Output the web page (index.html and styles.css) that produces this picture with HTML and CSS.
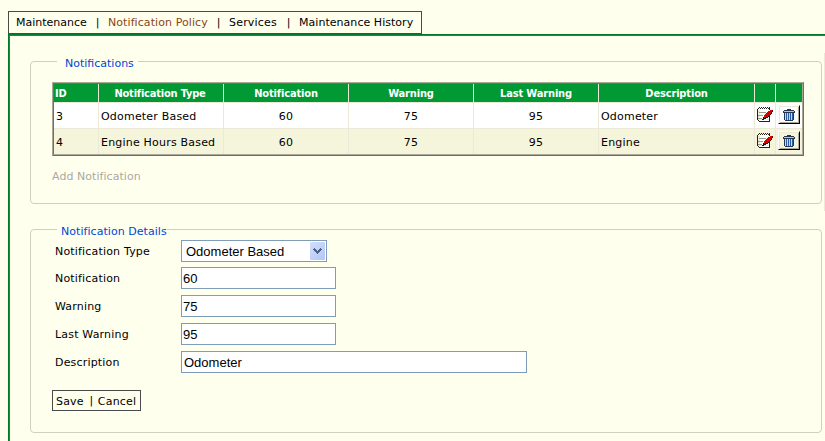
FILE: index.html
```html
<!DOCTYPE html>
<html lang="en">
<head>
<meta charset="utf-8">
<title>Notification Policy</title>
<link rel="stylesheet" href="styles.css">
</head>
<body>
<svg width="0" height="0" class="defs" aria-hidden="true">
  <symbol id="edit" viewBox="0 0 16 17" shape-rendering="crispEdges">
    <path fill="#fff" d="M1 3h12v12H1z"/>
    <path fill="#f0ecd2" d="M1 4h2v10H1zM1 13h11v1H1z"/>
    <path fill="#222" d="M0 3h1v11H0zM1 14h1v1H1zM2 15h11v1H2zM12 10h1v5h-1z"/>
    <path fill="#222" d="M1 2h1v1H1zM3 2h1v1H3zM5 2h1v1H5zM7 2h1v1H7zM9 2h1v1H9zM11 2h1v1h-1zM2 1h1v1H2zM4 1h1v1H4zM6 1h1v1H6zM8 1h1v1H8zM10 1h1v1h-1zM12 1h1v3h-1z"/>
    <path fill="#9c9a80" d="M2 6h7v1H2zM1 9h5v1H1zM1 12h4v1H1z"/>
    <path fill="#111" d="M5 13h2v1H5zM6 12h3v1H6zM8 11h3v1H8zM11 10h1v1h-1zM6 11h1v1H6z"/>
    <path fill="#e00000" d="M13 4h2v1h-2zM11 5h4v1h-4zM10 6h4v1h-4zM9 7h5v1H9zM8 8h5v1H8zM7 9h5v1H7zM7 10h4v1H7zM7 11h1v1H7z"/>
    <path fill="#600" d="M15 4h1v1h-1zM15 5h1v1h-1zM14 6h1v1h-1zM14 7h1v1h-1zM13 8h1v1h-1zM12 9h1v1h-1zM9 9h1v1H9zM11 7h1v1h-1z"/>
  </symbol>
  <symbol id="trash" viewBox="0 0 12 12" shape-rendering="crispEdges">
    <path fill="#26364f" d="M4 0h4v1H4zM1 1h10v1H1zM0 2h1v2H0zM11 2h1v2h-1zM1 3h10v1H1zM1 4h1v7H1zM10 4h1v7h-1zM2 11h8v1H2z"/>
    <path fill="#b4c0ee" d="M1 2h10v1H1z"/>
    <path fill="#b4dcfa" d="M2 4h8v7H2z"/>
    <path fill="#2b5ca8" d="M3 4h1v7H3zM5 4h1v7H5zM7 4h1v7H7zM9 4h1v7H9z"/>
  </symbol>
</svg>
<nav class="tabs">
  <a class="t1">Maintenance</a><i>|</i><a class="t2 active">Notification Policy</a><i>|</i><a class="t3">Services</a><i>|</i><a class="t4">Maintenance History</a>
</nav>
<main class="panel">
  <section class="group list">
    <h2><span>Notifications</span></h2>
    <div class="grid">
    <table>
      <colgroup><col class="c-id"><col class="c-m"><col class="c-m"><col class="c-m"><col class="c-m"><col class="c-desc"><col class="c-edit"><col class="c-del"></colgroup>
      <thead><tr><th class="left">ID</th><th>Notification Type</th><th>Notification</th><th>Warning</th><th>Last Warning</th><th>Description</th><th></th><th></th></tr></thead>
      <tbody>
        <tr><td>3</td><td>Odometer Based</td><td class="num">60</td><td class="num">75</td><td class="num">95</td><td>Odometer</td><td class="icon"><svg class="edit"><use href="#edit"/></svg></td><td class="icon"><button class="del" aria-label="Delete"><svg><use href="#trash"/></svg></button></td></tr>
        <tr class="alt"><td>4</td><td>Engine Hours Based</td><td class="num">60</td><td class="num">75</td><td class="num">95</td><td>Engine</td><td class="icon"><svg class="edit"><use href="#edit"/></svg></td><td class="icon"><button class="del" aria-label="Delete"><svg><use href="#trash"/></svg></button></td></tr>
      </tbody>
    </table>
    </div>
    <a class="add">Add Notification</a>
  </section>
  <section class="group details">
    <h2><span>Notification Details</span></h2>
    <form>
      <div class="row first"><label>Notification Type</label><div class="select"><span>Odometer Based</span><b><svg viewBox="0 0 9 6" shape-rendering="crispEdges"><path fill="#4d6185" d="M1 0h1v1h1v1h1v1h1v-1h1v-1h1v-1h1v1h1v1h-1v1h-1v1h-1v1h-1v1h-1v-1h-1v-1h-1v-1h-1v-1h-1v-1h1z"/></svg></b></div></div>
      <div class="row"><label for="n">Notification</label><input id="n" class="field number" value="60"></div>
      <div class="row"><label for="w">Warning</label><input id="w" class="field number" value="75"></div>
      <div class="row"><label for="l">Last Warning</label><input id="l" class="field number" value="95"></div>
      <div class="row"><label for="d">Description</label><input id="d" class="field wide" value="Odometer"></div>
    </form>
    <div class="actions"><a>Save</a><i>|</i><a>Cancel</a></div>
  </section>
  <div class="edge"></div>
</main>
</body>
</html>
```
FILE: styles.css
```css
* { box-sizing: border-box; }
html { overflow: hidden; }
body {
  margin: 0;
  padding: 11px 0 0 8px;
  height: 441px;
  overflow: hidden;
  background: #ffffee;
  color: #000;
  font: 11px/14px "DejaVu Sans", Verdana, sans-serif;
}
.defs { position: absolute; }
.tabs {
  display: flex;
  align-items: center;
  width: 414px;
  height: 23px;
  padding-left: 7px;
  border: 1px solid #4a4a4a;
  white-space: nowrap;
}
.tabs a { padding-top: 1px; }
.tabs i, .actions i {
  display: flex;
  justify-content: center;
  width: 1px;
  font-style: normal;
  letter-spacing: 0;
}
.t1 { width: 81px; }
.t2 { width: 110px; margin-left: 10px; letter-spacing: .08px; }
.t3 { width: 59px; margin-left: 10px; letter-spacing: .2px; }
.t4 { margin-left: 10px; letter-spacing: .04px; }
.active { color: #8b4513; }
.panel {
  position: relative;
  height: 420px;
  border: solid #007a29;
  border-width: 1px 0 0 1px;
  box-shadow: inset 1px 1px #009933;
  padding: 26px 0 0 21px;
}
.group {
  position: relative;
  width: 792px;
  border: 1px solid #d0d0bf;
  border-radius: 4px;
}
.group h2 {
  position: absolute;
  top: -7px;
  left: 26px;
  margin: 0;
  height: 16px;
  padding-top: 1px;
  background: #ffffee;
  color: #0046d5;
  font-size: 11px;
  font-weight: normal;
  line-height: 16px;
  white-space: nowrap;
}
.list { height: 143px; padding: 20px 0 0 21px; }
.list h2 { width: 81px; padding-left: 8px; }
.details { height: 204px; margin-top: 25px; padding: 10px 0 0 21px; }
.details h2 { width: 110px; padding-left: 4px; letter-spacing: .05px; }
.edge { position: absolute; left: 815px; top: 18px; width: 1px; height: 158px; background: #ece9d8; }
.grid {
  width: 752px;
  border: 1px solid;
  border-color: #aca899 #716f64 #716f64 #aca899;
}
table {
  width: 750px;
  table-layout: fixed;
  border: 1px solid;
  border-color: #716f64 #aca899 #aca899 #716f64;
  border-spacing: 0;
  letter-spacing: .2px;
}
.c-id { width: 45px; }
.c-m { width: 125px; }
.c-desc { width: 156px; }
.c-edit { width: 21px; }
th, td {
  border-right: 1px solid #ece9d8;
  white-space: nowrap;
}
th:last-child, td:last-child { border-right: 0; }
th {
  height: 19px;
  padding: 1px 0 0;
  border-bottom: 1px solid #ece9d8;
  background: #009933;
  color: #fff;
  font-family: "DejaVu Sans Condensed", "DejaVu Sans", sans-serif;
  font-stretch: condensed;
  letter-spacing: -.15px;
  line-height: 17px;
}
th:nth-child(2) { padding-right: 2px; letter-spacing: -.2px; }
.left { text-align: left; padding-left: 1px; }
td {
  height: 26px;
  padding: 3px 0 0 2px;
  border-bottom: 1px solid #ece9d8;
  background: #fff;
}
.alt td { height: 25px; border-bottom: 0; background: #f5f5dc; }
.num { text-align: center; padding-left: 0; }
td.icon { padding: 0 0 2px 2px; }
.edit { display: block; width: 16px; height: 17px; }
.del {
  display: flex;
  justify-content: center;
  align-items: center;
  width: 22px;
  height: 19px;
  padding: 0;
  border: 1px solid #fff;
  border-right-color: #000;
  border-bottom-color: #000;
  background: transparent;
  box-shadow: inset 1px 1px #ece9d8, inset -1px -1px #aca899;
}
.del svg { width: 12px; height: 12px; }
.add {
  display: block;
  width: max-content;
  margin-top: 14px;
  color: #aca899;
  text-shadow: 1px 1px #fff;
  letter-spacing: .05px;
}
.row { display: flex; align-items: center; height: 22px; margin-top: 6px; padding-left: 3px; }
.first { margin: 0 0 5px; }
.first + .row { margin-top: 0; }
.row label { width: 126px; padding-top: 2px; letter-spacing: .18px; }
.field, .select {
  width: 155px;
  height: 22px;
  padding: 1px 0 0 2px;
  border: 1px solid #7f9db9;
  border-radius: 0;
  background: #fff;
  color: #000;
  font: 13px/20px "Liberation Sans", Arial, sans-serif;
}
.number { padding-left: 1px; }
.wide { width: 346px; }
.select { display: flex; justify-content: space-between; width: 146px; padding: 1px 1px 1px 4px; line-height: 19px; }
.select b {
  display: flex;
  justify-content: center;
  align-items: center;
  width: 15px;
  height: 18px;
  border-radius: 1px;
  background: linear-gradient(135deg, #d3defe, #b1c6f6);
}
.select svg { width: 9px; height: 6px; }
.actions {
  display: flex;
  align-items: center;
  width: 89px;
  height: 21px;
  margin-top: 17px;
  padding-left: 3px;
  border: 1px solid #4a4a4a;
  letter-spacing: .2px;
}
.actions a { padding-top: 2px; }
.actions i { margin: 0 6px 0 7px; }
```
